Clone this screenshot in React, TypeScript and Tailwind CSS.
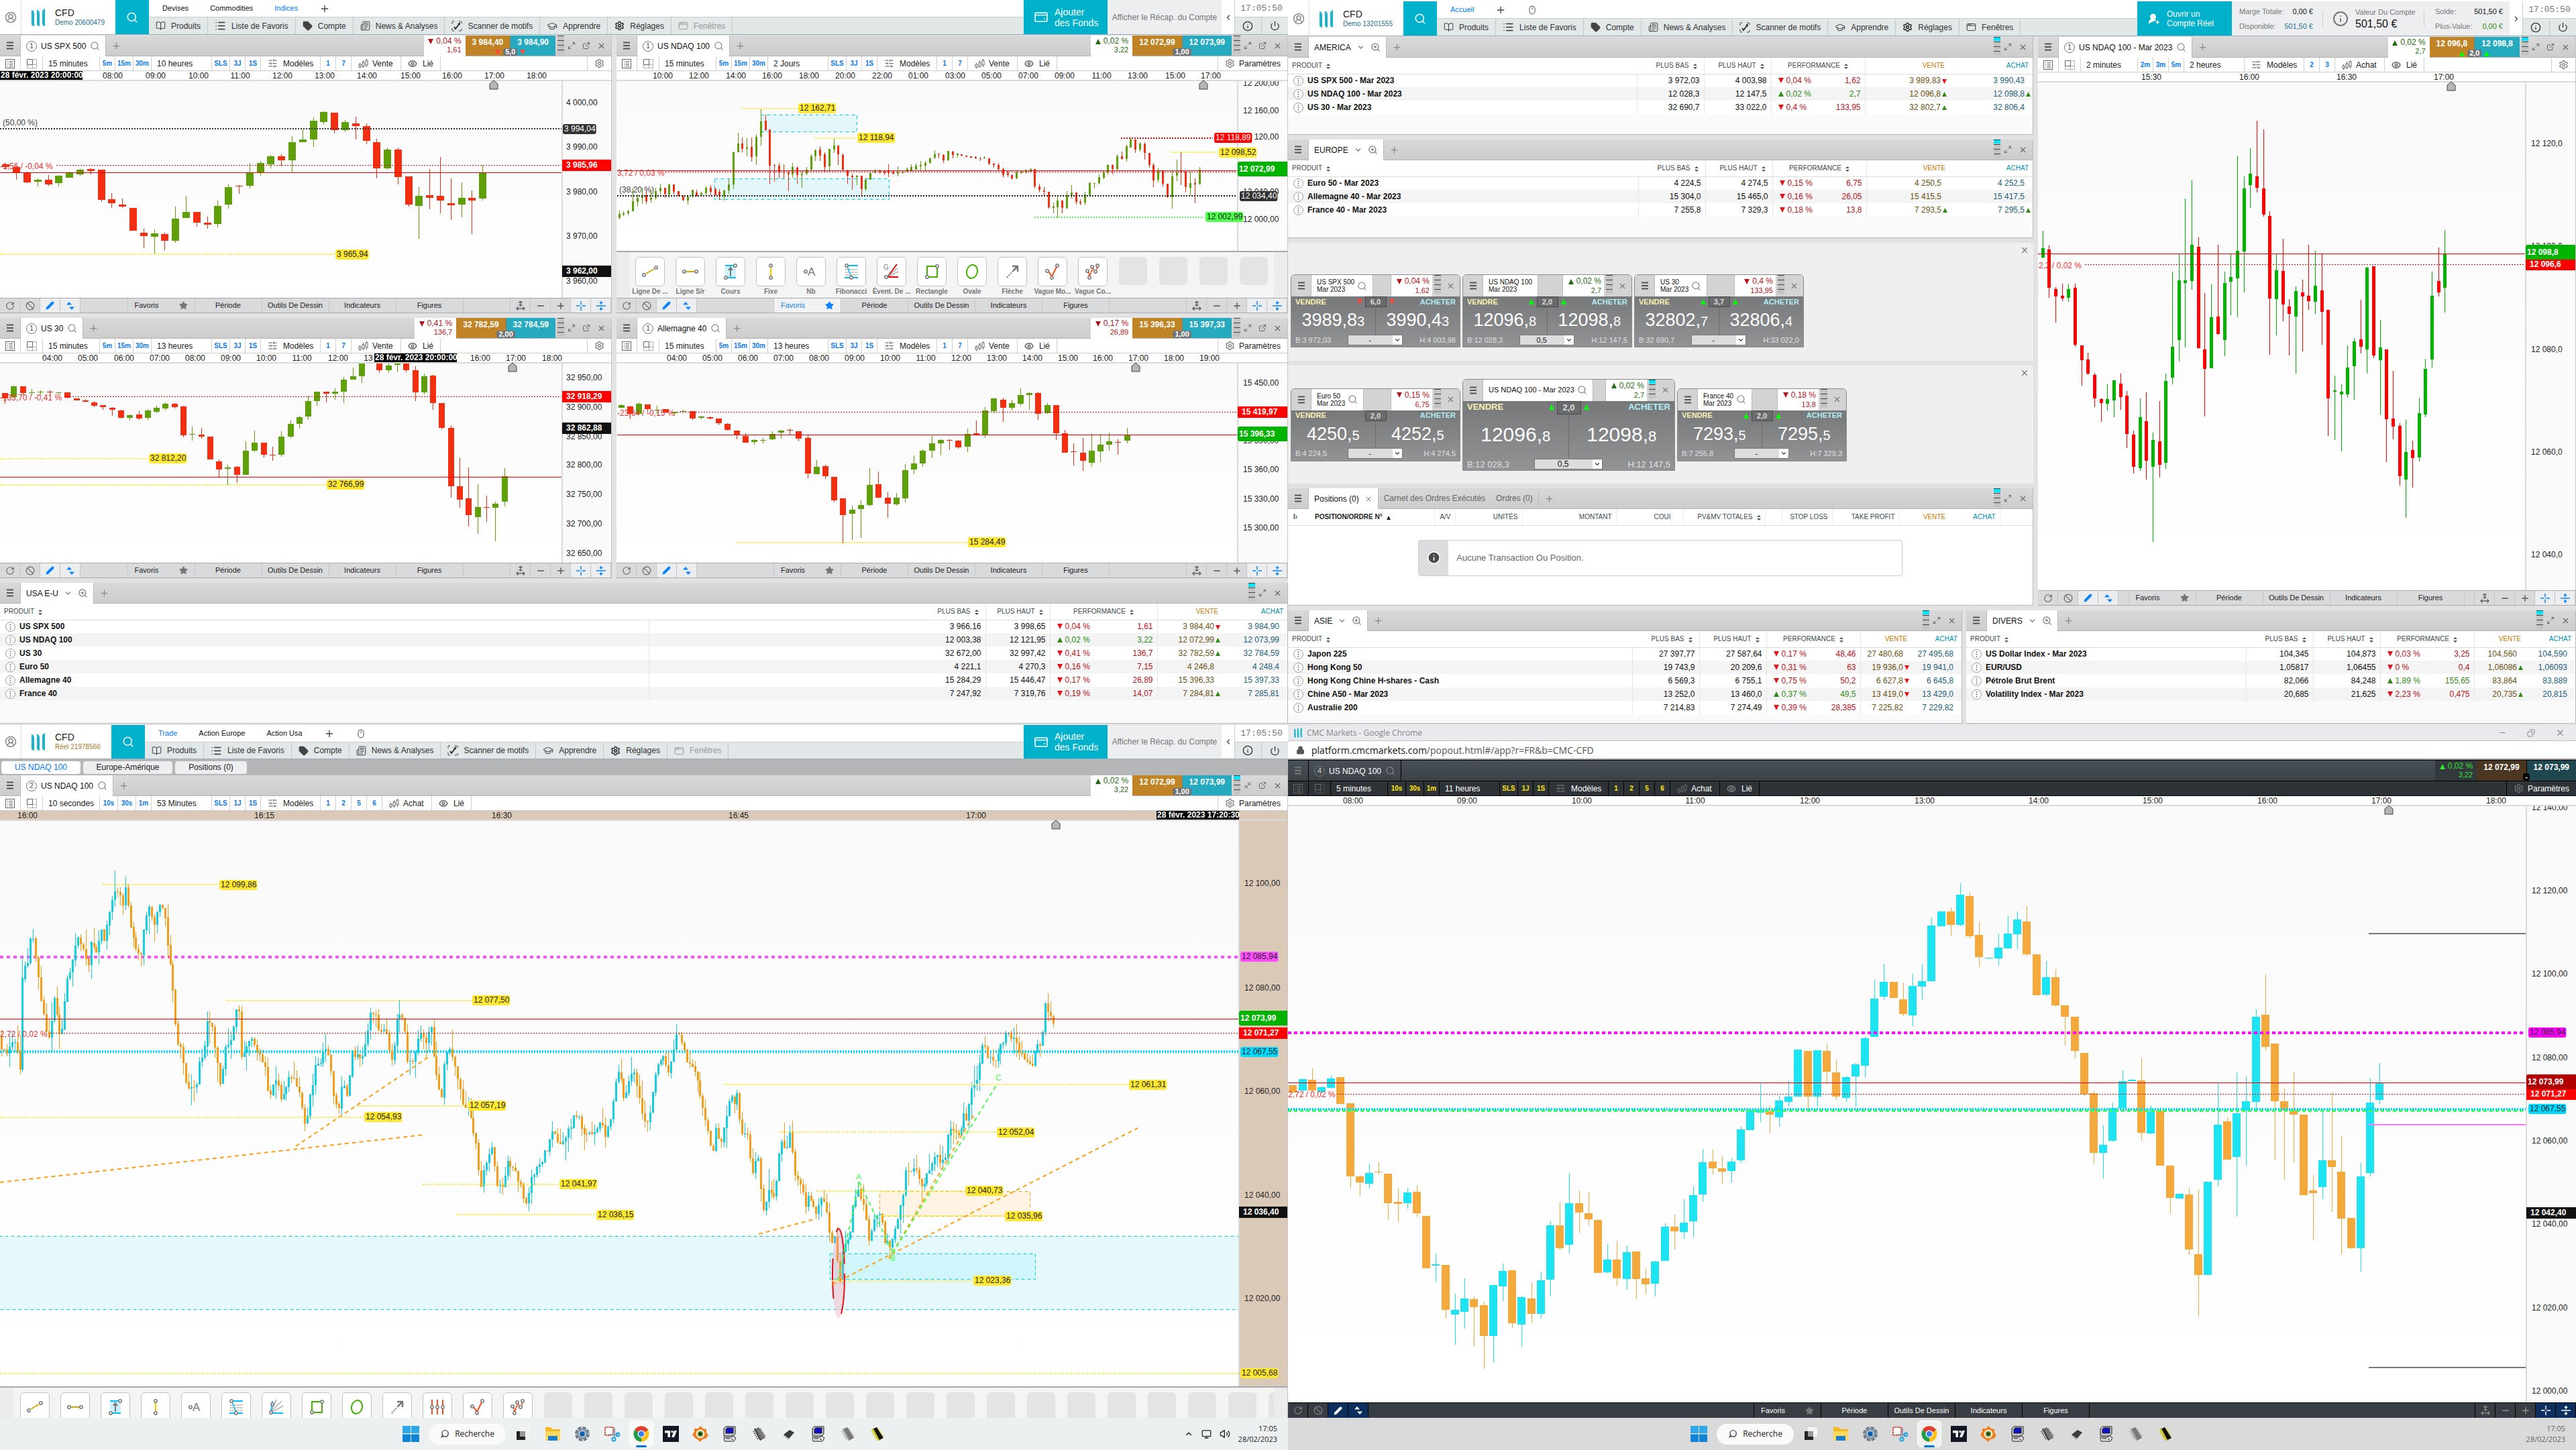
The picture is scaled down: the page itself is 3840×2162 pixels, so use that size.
import React from "react";
import {
  Search, Plus, X, ZoomIn, ChevronDown, ChevronLeft, ChevronRight, ChevronUp, Settings, RotateCw, Ban, Pencil, Star,
  Minus, Power, Info, CircleUserRound, List, Newspaper, GraduationCap, SlidersHorizontal, Eye, ExternalLink,
  Maximize2, Minimize2, Volume2, Lock, Tag, AppWindow, BookOpen, UserRoundPlus, Monitor, MouseIcon, Copy,
} from "lucide-react";

/* ---------- small drawings ---------- */

const Tri = ({ up, className = "" }: { up?: boolean; className?: string }) => (
  <svg width="8" height="8" viewBox="0 0 8 8" className={"inline-block shrink-0 " + className} aria-hidden="true">
    <path d={up ? "M4 0 8 8H0Z" : "M0 0H8L4 8Z"} fill="currentColor" />
  </svg>
);

const Bars = ({ className = "text-[#444]" }: { className?: string }) => (
  <svg width="10" height="12" viewBox="0 0 10 12" className={className} aria-hidden="true">
    <path d="M0 1.5H10M0 6H10M0 10.5H10" stroke="currentColor" strokeWidth="2" />
  </svg>
);

const Ladder = ({ on }: { on?: boolean }) => (
  <svg width="10" height="28" viewBox="0 0 10 28" className="ml-[3px] shrink-0" aria-hidden="true">
    <rect width="10" height="28" fill="#c4c4c4" />
    {on && <rect y="1" width="10" height="5" fill="#00e5ff" />}
    <path d="M0 .5H10M0 7.500H10M0 14.500H10M0 21.500H10" stroke="#444" />
  </svg>
);

const SortIcon = () => (
  <svg width="6" height="8" viewBox="0 0 6 8" className="ml-1.5 inline-block" aria-hidden="true">
    <path d="M3 0 6 3H0ZM3 8 0 5H6Z" fill="#4b5a60" />
  </svg>
);

const Logo = () => (
  <svg width="22" height="26" viewBox="0 0 22 26" aria-hidden="true">
    <path d="M1 2q4 .5 4 6v18q-4-.5-4-3ZM9 1.500q4 .5 4 6V26q-4-.5-4-3ZM21 0v26q-4-.5-4-4V5q0-4 4-5Z" fill="#17b5d0" />
  </svg>
);

const CandleIcon = () => (
  <svg width="15" height="14" viewBox="0 0 15 14" fill="none" stroke="currentColor" aria-hidden="true">
    <path d="M2.500 6V8M2.500 12V14M7.500 2V5M7.500 11V13M12.500 0V2M12.500 9V12" />
    <rect x="1" y="8" width="3" height="4" />
    <rect x="6" y="5" width="3" height="6" />
    <rect x="11" y="2" width="3" height="7" />
  </svg>
);

const ListBox = () => (
  <svg width="14" height="14" viewBox="0 0 14 14" fill="none" stroke="currentColor" aria-hidden="true">
    <rect x=".5" y=".5" width="13" height="13" />
    <path d="M3 3.500H4M5.500 3.500H11M3 6H4M5.500 6H11M3 8.500H4M5.500 8.500H11M3 11H4M5.500 11H11" />
  </svg>
);

const GridBox = () => (
  <svg width="15" height="14" viewBox="0 0 15 14" fill="none" stroke="currentColor" aria-hidden="true">
    <path d="M.5.5H8.500V8.500H.5Z" />
    <path d="M8.500.5H14.500V13.500H.5V8.500M8.500 8.500H14.500M8.500 8.500V13.500" strokeDasharray="1 1" />
  </svg>
);

const ScannerIcon = () => (
  <svg width="16" height="16" viewBox="0 0 16 16" fill="none" stroke="currentColor" aria-hidden="true">
    <path d="M1 5V1H5M11 1H15V5M1 11V15H5M11 15H15V11" strokeDasharray="3 1" />
    <path d="M4 9 6 12 12 4" strokeWidth="2" />
    <path d="M13 2.500 9 4 12.500 7Z" fill="currentColor" stroke="none" />
  </svg>
);

const StretchIcon = () => (
  <svg width="14" height="14" viewBox="0 0 14 14" fill="none" stroke="currentColor" strokeWidth="1.500" aria-hidden="true">
    <path d="M7 0V8M4.500 2.500 7 0 9.500 2.500M4.500 6H9.500M1 11H13M3.500 8.500 1 11 3.500 13.500M10.500 8.500 13 11 10.500 13.500" />
  </svg>
);

const CrossIcon = () => (
  <svg width="14" height="14" viewBox="0 0 14 14" stroke="currentColor" aria-hidden="true">
    <path d="M7 0V5.500M7 8.500V14M0 7H5.500M8.500 7H14" strokeWidth="1.500" />
  </svg>
);

const SplitIcon = () => (
  <svg width="14" height="14" viewBox="0 0 14 14" fill="none" stroke="currentColor" aria-hidden="true">
    <path d="M0 7H14M7 1V5M7 9V13M5 3 7 1 9 3M5 11 7 13 9 11" strokeWidth="1.500" />
  </svg>
);

const UpDown = () => (
  <svg width="12" height="12" viewBox="0 0 12 12" fill="currentColor" aria-hidden="true">
    <path d="M4 0 8 4.500H0ZM8 12 4 7.500H12Z" />
  </svg>
);

/* ---------- page header ---------- */

const menuItems: [string, React.ReactNode][] = [
  ["Produits", <BookOpen size={15} strokeWidth={1.5} />],
  ["Liste de Favoris", <List size={17} strokeWidth={2} />],
  ["Compte", <Tag size={15} fill="#444" stroke="#444" />],
  ["News & Analyses", <Newspaper size={15} strokeWidth={1.5} />],
  ["Scanner de motifs", <ScannerIcon />],
  ["Apprendre", <GraduationCap size={16} strokeWidth={1.5} />],
  ["Réglages", <Settings size={15} strokeWidth={2.5} />],
  ["Fenêtres", <AppWindow size={15} strokeWidth={1.5} />],
];

function Header(p: {
  kind: string; id: string; real?: boolean; tabs: string[]; active: string; mouse?: boolean; noWindows?: boolean; summary?: boolean;
}) {
  return (
    <header className={"flex shrink-0 border-b border-[#9fabb8] bg-white " + (p.real ? "h-[51px]" : "h-[52px]")}>
      <button aria-label="Profil" className="flex w-8 items-center justify-center border-r border-[#ddd] text-[#888]">
        <CircleUserRound size={18} />
      </button>
      <div className={"flex items-center gap-3.5 pl-3.5 " + (p.real ? "w-[134px]" : "w-[140px]")}>
        <Logo />
        <div>
          <div className="text-[14px] leading-4 text-[#222]">CFD</div>
          <div className={"whitespace-nowrap text-[10px] leading-[14px] " + (p.real ? "text-[#a87b25]" : "text-[#1d6f92]")}>
            {p.kind} {p.id}
          </div>
        </div>
      </div>
      <button aria-label="Rechercher" className="flex w-[50px] items-center justify-center bg-[#00b1cc] text-white">
        <Search size={18} strokeWidth={2} />
      </button>
      <div className="flex min-w-0 flex-1 flex-col">
        <nav className="flex h-[25px] items-center gap-8 pl-5 text-[11px] text-[#111]">
          {p.tabs.map((t) => (
            <button key={t} className={t === p.active ? "text-[#007aff]" : ""}>{t}</button>
          ))}
          <button aria-label="Ajouter un onglet" className="text-[#444]"><Plus size={16} strokeWidth={2} /></button>
          {p.mouse && <MouseIcon size={14} strokeWidth={2} className="text-[#666]" />}
        </nav>
        <nav className="flex flex-1 border-t border-[#c9cdcf] bg-[#e2e7e8] text-[12px] text-[#333]">
          {menuItems.map(([t, icon]) => (
            <button
              key={t}
              className={"flex items-center gap-2 whitespace-nowrap border-r border-[#c3c8ca] px-2.5 " + (p.noWindows && t === "Fenêtres" ? "text-[#999]" : "")}
            >
              {icon}
              {t}
            </button>
          ))}
        </nav>
      </div>
      {p.summary ? (
        <>
          <button className="flex w-[141px] items-center gap-2.5 bg-[#00b1cc] pl-4 text-left text-[12px] leading-[14px] text-white">
            <UserRoundPlus size={18} fill="white" />
            <span>Ouvrir un<br />Compte Réel</span>
          </button>
          <div className="flex w-[414px] items-center bg-[#edeef0] pl-[11px] text-[11px] leading-[22px] text-[#777]">
            <dl className="grid w-[110px] grid-cols-[1fr_auto]">
              <dt>Marge Totale:</dt><dd className="text-right text-[#111]">0,00 €</dd>
              <dt>Disponible:</dt><dd className="text-right text-[#1d6f92]">501,50 €</dd>
            </dl>
            <div className="mx-3.5 h-6 border-l border-[#ccc]" />
            <Info size={24} strokeWidth={2} />
            <div className="ml-2.5 flex-1 leading-4">
              Valeur Du Compte
              <div className="text-[16px] leading-5 text-[#111]">501,50 €</div>
            </div>
            <div className="mr-4 h-6 border-l border-[#ccc]" />
            <dl className="mr-2.5 grid w-[101px] grid-cols-[1fr_auto]">
              <dt>Solde:</dt><dd className="text-right text-[#111]">501,50 €</dd>
              <dt>Plus-Value:</dt><dd className="text-right text-[#2f8a16]">0,00 €</dd>
            </dl>
          </div>
        </>
      ) : (
        <>
          <button className="flex w-[125px] items-center gap-2.5 bg-[#00b1cc] pl-4 text-left text-[14px] leading-4 text-white">
            <svg width="20" height="15" viewBox="0 0 20 15" fill="none" stroke="white" strokeWidth="1.500" aria-hidden="true">
              <rect x="1" y="1" width="18" height="13" rx="1" />
              <path d="M1 4.500H19M15 9V11" />
            </svg>
            <span>Ajouter<br />des Fonds</span>
          </button>
          <button className="w-[170px] whitespace-nowrap bg-[#edeef0] text-[12px] text-[#777]">Afficher le Récap. du Compte</button>
        </>
      )}
      <button aria-label="Replier" className="flex w-[19px] items-center justify-center text-[#555]">
        {p.summary ? <ChevronRight size={12} strokeWidth={3} /> : <ChevronLeft size={12} strokeWidth={3} />}
      </button>
      <div className="flex w-20 flex-col border-l border-[#ccc]">
        <time className="flex h-[25px] items-center justify-center font-['Liberation_Mono',monospace] text-[13px] text-[#777]">17:05:50</time>
        <div className="grid flex-1 grid-cols-2 border-t border-[#c9cdcf] bg-[#e2e7e8] text-[#333]">
          <button aria-label="Informations" className="flex items-center justify-center border-r border-[#c3c8ca]"><Info size={16} strokeWidth={2} /></button>
          <button aria-label="Déconnexion" className="flex items-center justify-center"><Power size={15} strokeWidth={2} /></button>
        </div>
      </div>
    </header>
  );
}

/* ---------- panel chrome ---------- */

function WindowButtons({ popout, min, dark }: { popout?: boolean; min?: boolean; dark?: boolean }) {
  if (dark) return null;
  const cls = "flex w-[22px] items-center justify-center text-[#666]";
  return (
    <div className="mr-1 flex">
      <button aria-label="Agrandir" className={cls}>{min ? <Minimize2 size={12} /> : <Maximize2 size={12} strokeWidth={2} />}</button>
      {popout && <button aria-label="Détacher" className={cls}><ExternalLink size={12} strokeWidth={2} /></button>}
      <button aria-label="Fermer" className={cls}><X size={13} strokeWidth={2} /></button>
    </div>
  );
}

function ChartTabs(p: {
  n: string; name: string; up?: boolean; pct: string; diff: string; sell: string; buy: string; spread: string;
  tick?: "up" | "down"; ladder?: boolean; min?: boolean; dark?: boolean;
}) {
  const d = p.dark;
  return (
    <div className={"flex h-[31px] shrink-0 border-b " + (d ? "border-black bg-linear-to-b from-[#4a5057] to-[#3b4147]" : "border-[#b4b4b4] bg-linear-to-b from-[#d9d9d9] to-[#cccccc]")}>
      <button aria-label="Menu" className={"flex w-[31px] items-center justify-center border-r " + (d ? "border-black" : "border-[#bbb]")}>
        <Bars className={d ? "text-[#777]" : "text-[#555]"} />
      </button>
      <div className={"-mb-px flex items-center gap-1.5 border-r px-2 text-[12px] " + (d ? "border-black text-white" : "border-[#bbb] bg-white text-[#111]")}>
        <span className={"flex size-4 items-center justify-center rounded-full border border-[#777] text-[11px] leading-none " + (d ? "text-[#ccc]" : "text-[#555]")}>{p.n}</span>
        <span className="whitespace-nowrap">{p.name}</span>
        <Search size={15} strokeWidth={2} className="text-[#888]" />
      </div>
      {!d && <button aria-label="Nouvel onglet" className="ml-2 text-[#888]"><Plus size={15} strokeWidth={2} /></button>}
      <div className="flex-1" />
      <div className={"w-[62px] pr-1.5 pt-0.5 text-right leading-[13px] " + (d ? "bg-[#33383c] text-[#2ee62e]" : "-mb-px bg-white " + (p.up ? "text-[#1f6b10]" : "text-[#b8121b]"))}>
        <div className="whitespace-nowrap text-[12px]"><Tri up={p.up} className="mr-1" />{p.pct}</div>
        <div className="text-[11px]">{p.diff}</div>
      </div>
      <div className="relative flex text-[12px] font-bold leading-[21px] text-white">
        <button className={"flex items-start px-2.5 " + (d ? "bg-[#4a3621]" : "bg-[#c08427]")}>{p.sell}</button>
        <button className={"flex items-start border-l px-2.5 " + (d ? "border-black bg-[#1e4750]" : "border-[#777] bg-[#26aabf]")}>{p.buy}</button>
        <div className="absolute inset-x-0 bottom-0 flex items-center justify-center gap-1">
          {p.tick && <Tri up={p.tick === "up"} className={p.tick === "up" ? "text-[#0f0]" : "text-[#ff4a3a]"} />}
          <span className={"rounded-sm px-[3px] text-[11px] leading-[11px] text-white " + (d ? "bg-black" : "bg-[#707376]")}>{p.spread}</span>
          {p.tick && <Tri up={p.tick === "up"} className={p.tick === "up" ? "text-[#0f0]" : "text-[#ff4a3a]"} />}
        </div>
      </div>
      {!d && <Ladder on={p.ladder} />}
      <WindowButtons popout min={p.min} dark={d} />
    </div>
  );
}

function Toolbar(p: {
  period: string; chips: string[]; span: string; spans: string[]; models: string[]; side: string; params?: boolean; dark?: boolean;
}) {
  const b = p.dark ? "border-black" : "border-[#d0d0d0]";
  const chip = "flex items-center justify-center border-r text-[10px] font-bold " + b + (p.dark ? " text-[#ffe600]" : " text-[#0a78f0]");
  const cell = "flex items-center border-r " + b;
  return (
    <div className={"flex h-[22px] shrink-0 items-stretch border-b text-[12px] " + (p.dark ? "border-black bg-[#2e3338] text-white" : "border-[#ccc] bg-white text-[#222]")}>
      <button aria-label="Liste" className={cell + " w-[31px] justify-center text-[#666]"}><ListBox /></button>
      <button aria-label="Disposition" className={cell + " w-[33px] justify-center text-[#666]"}><GridBox /></button>
      <button className={cell + " w-[85px] pl-2"}>{p.period}</button>
      {p.chips.map((c) => <button key={c} className={chip + (c.length > 2 ? " w-[27px]" : " w-[23px]")}>{c}</button>)}
      <button className={cell + " w-[90px] pl-2"}>{p.span}</button>
      {p.spans.map((c) => <button key={c} className={chip + (c.length > 2 ? " w-[27px]" : " w-[23px]")}>{c}</button>)}
      <button className={cell + " w-[89px] gap-2 pl-2.5"}><SlidersHorizontal size={15} strokeWidth={2} className="text-[#777]" />Modèles</button>
      {p.models.map((c) => <button key={c} className={chip + " w-[23px]"}>{c}</button>)}
      <button className={cell + " w-[74px] gap-1.5 pl-2.5"}><span className="text-[#666]"><CandleIcon /></span>{p.side}</button>
      <button className={cell + " w-[59px] gap-2 pl-2.5"}><Eye size={14} strokeWidth={3} className="text-[#777]" />Lié</button>
      <div className="flex-1" />
      <button aria-label="Paramètres" className={"flex items-center gap-1.5 border-l px-2.5 " + b}>
        <Settings size={15} strokeWidth={2} className="text-[#777]" />
        {p.params && "Paramètres"}
      </button>
    </div>
  );
}

function BottomBar({ fav, dark }: { fav?: boolean; dark?: boolean }) {
  const b = dark ? "border-black" : "border-[#c3c5c7]";
  const cell = "flex w-[30px] shrink-0 items-center justify-center border-r " + b;
  const on = dark ? " bg-[#0d2f5e] text-white" : " bg-[#ecedef] text-[#0a84ff]";
  const off = dark ? " text-[#888]" : " text-[#666]";
  return (
    <div className={"flex h-[23px] shrink-0 border-t text-[11px] " + (dark ? "border-black bg-[#373d43] text-white" : "border-b border-[#a9a9a9] bg-[#d9dadc] text-[#222]")}>
      <button aria-label="Actualiser" className={cell + off}><RotateCw size={14} /></button>
      <button aria-label="Effacer" className={cell + off}><Ban size={14} /></button>
      <button aria-label="Dessiner" className={cell + on}><Pencil size={13} fill="currentColor" /></button>
      <button aria-label="Ordre" className={cell + on}><UpDown /></button>
      <div className={"flex-1 border-r " + b} />
      <button className={"flex w-[100px] items-center justify-between border-r px-2.5 " + b + (fav ? " bg-[#f2f2f2] text-[#0a84ff]" : "")}>
        Favoris<Star size={13} fill="currentColor" className={fav ? "" : "text-[#777]"} />
      </button>
      {["Période", "Outils De Dessin", "Indicateurs", "Figures"].map((t) => (
        <button key={t} className={"w-[100px] whitespace-nowrap border-r " + b}>{t}</button>
      ))}
      <div className={"flex-1 border-r " + b} />
      <button aria-label="Ajuster" className={cell + off}><StretchIcon /></button>
      <button aria-label="Réduire" className={cell + off}><Minus size={14} strokeWidth={3} /></button>
      <button aria-label="Augmenter" className={cell + off}><Plus size={14} strokeWidth={3} /></button>
      <button aria-label="Réticule" className={cell + on}><CrossIcon /></button>
      <button aria-label="Échelle" className={cell + on}><SplitIcon /></button>
    </div>
  );
}

/* ---------- chart ---------- */

type Line = [number, number, number, number, string, number?, string?];
type PriceTag = [number, number, string, string, string, ("tag" | "axis" | "live")?];
interface ChartProps {
  sx: number; sy: number; dx: number; dy: number;
  axisX: number; priceX: number; barW: number;
  x0: number; step: number; candles: string; up: string; down: string;
  times: [number, string][]; prices: [number, string][];
  under?: Line[]; over?: Line[]; zones?: [number, number, number, number, string, string][];
  tags?: PriceTag[]; notes?: [number, number, string, string][];
  stamp?: [number, string]; marker: number; axisFill?: string; children?: React.ReactNode;
}

const textWidth = (s: string) => [...s].reduce((w, c) => w + (c === " " || c === "," ? 0.278 : 0.556), 0) * 12;

function Chart(c: ChartProps) {
  const X = (v: number) => Math.round(v / c.sx + c.dx);
  const Y = (v: number) => Math.round(v / c.sy + c.dy);
  const top = 14;
  const ax = X(c.axisX);
  const fill = c.axisFill ?? "#fafafa";
  const id = "plot" + c.axisX + "-" + c.marker;
  const line = ([x1, y1, x2, y2, col, w = 1, dash]: Line, i: number) => (
    <line key={i} x1={X(x1)} x2={X(x2)} y1={Y(y1) + (y1 === y2 && w % 2 ? 0.5 : 0)} y2={Y(y2) + (y1 === y2 && w % 2 ? 0.5 : 0)} stroke={col} strokeWidth={w} strokeDasharray={dash} />
  );
  return (
    <svg className="block min-h-0 w-full flex-1" fontSize="12" role="img" aria-label="Graphique en chandeliers">
      <defs>
        <linearGradient id={id} x1="0" y1="0" x2="0" y2="1">
          <stop offset="0" stopColor="#f9f9f9" />
          <stop offset="1" stopColor="#ffffff" />
        </linearGradient>
      </defs>
      <rect width="100%" height="100%" fill={`url(#${id})`} />
      {c.zones?.map(([x1, y1, x2, y2, f, s], i) => (
        <rect key={i} x={X(x1) + 0.5} y={Y(y1) + 0.5} width={X(x2) - X(x1)} height={Y(y2) - Y(y1)} fill={f} stroke={s} strokeDasharray="5 4" />
      ))}
      {c.under?.map(line)}
      <g shapeRendering="crispEdges">
        {c.candles.trim().split(/\s+/).map((s, i) => {
          if (s === "-") return null;
          const [a, b, d, e, k] = s.split(",");
          const cx = Math.round((c.x0 + i * c.step) / c.sx + c.dx);
          const col = k === "u" ? c.up : k === "d" ? c.down : "#111";
          return (
            <g key={i} fill={col}>
              <rect x={cx} y={Y(+a)} width="1" height={Math.max(1, Y(+e) - Y(+a))} />
              <rect x={cx - Math.floor(c.barW / 2)} y={Y(+b)} width={c.barW} height={Math.max(1, Y(+d) - Y(+b))} />
            </g>
          );
        })}
      </g>
      {c.children}
      {c.over?.map(line)}
      {c.notes?.map(([x, y, t, col]) => <text key={t} x={X(x)} y={Y(y) + 4} fill={col}>{t}</text>)}
      <rect x={ax} y={top} width="2000" height="100%" fill={fill} />
      <line x1={ax} x2={ax} y1={top} y2="100%" stroke="#dadada" strokeWidth="2" />
      {c.prices.map(([y, t]) => <text key={t} x={X(c.priceX)} y={Y(y) + 4} fill="#222">{t}</text>)}
      <rect width="100%" height={top} fill={c.axisFill ?? "#fff"} />
      <line x1="0" x2="100%" y1={top} y2={top} stroke="#dadada" strokeWidth="2" />
      {c.times.map(([x, t]) => <text key={t} x={X(x)} y="11" textAnchor="middle" fill="#222">{t}</text>)}
      {c.stamp && (
        <>
          <rect x={X(c.stamp[0])} width="123" height="13" fill="#000" />
          <text x={X(c.stamp[0]) + 1} y="10" fill="#fff" fontWeight="bold">{c.stamp[1]}</text>
        </>
      )}
      <path d={`M${X(c.marker) - 6} ${top + 13}v-8l6 -5 6 5v8z`} fill="#b5b5b5" stroke="#444" />
      {c.tags?.map(([x, y, t, bg, fg, kind = "tag"], i) => {
        const h = kind === "live" ? 22 : kind === "axis" ? 17 : 15;
        return (
          <g key={i}>
            <rect x={X(x)} y={Y(y) - Math.floor(h / 2)} width={kind === "tag" ? textWidth(t) + 3 : 76} height={h} rx={kind === "axis" ? 0 : 3} fill={bg} />
            <text x={X(x) + (kind === "axis" ? 6 : 2)} y={Y(y) + 4} fill={fg} fontWeight={kind === "tag" ? "normal" : "bold"}>{t}</text>
          </g>
        );
      })}
    </svg>
  );
}

const G = "#5fa00a", R = "#f42e10", YL = "#ffe82e", RED = "#f00000";
const DOT = "2 2";
const hours = (xs: number[], from: number): [number, string][] =>
  xs.map((x, i) => [x, String(from + i).padStart(2, "0") + ":00"]);

const spx = `732,735,747,760,d 745,747,772,804,d 767,772,816,819,d 799,804,813,834,u 784,804,825,831,d 784,786,819,834,u 769,771,795,795,u 756,759,780,785,u 752,756,765,780,d 759,759,894,903,d 864,891,909,930,d 888,915,924,930,d 930,930,1032,1032,d 1023,1041,1056,1110,d 1026,1044,1059,1134,u 1041,1047,1077,1119,d 924,978,1077,1086,u 876,948,975,975,u 948,948,996,1014,d 969,996,1005,1023,d 897,921,1002,1017,u 825,837,915,933,u 829,831,834,867,d 729,772,831,843,u 720,729,772,786,u 693,699,735,753,u 690,699,717,744,d 609,636,717,772,u 579,624,636,636,u 525,540,624,657,u 498,501,546,558,u 504,504,582,597,d 538,546,582,591,u 522,552,564,624,d 552,564,630,645,d 621,636,753,798,d 660,669,753,759,u 660,669,792,825,d 789,789,915,924,d 837,876,921,1068,u 756,873,885,936,d 702,876,897,954,d 798,909,918,984,d 816,885,915,972,u 852,885,897,1047,d 738,772,888,897,u`;

const us30 = `329,329,350,371,d 301,303,345,350,u 303,303,329,337,d 313,326,329,338,u 320,323,326,336,u 320,324,327,342,d 327,327,329,336,u 327,327,348,350,d 350,350,358,358,d 353,358,363,366,d 360,366,379,384,d 376,376,384,395,d 383,387,395,418,d 395,397,426,429,d 413,416,426,436,u 400,413,429,433,d 392,397,426,434,u 379,387,402,408,u 366,371,389,397,u 368,371,384,389,d 379,382,494,502,d 460,488,491,515,u 465,491,499,507,d 499,499,588,588,d 588,596,627,658,d 609,619,625,687,u 614,617,648,679,d 517,554,648,648,u 476,523,554,559,u 523,523,570,580,d 538,569,571,593,d 478,499,570,578,u 436,449,499,504,u 418,423,449,468,u 340,361,421,433,u 324,324,361,379,u 324,324,332,366,d 311,324,332,355,u 267,277,324,368,u 230,264,277,277,u 212,212,264,290,u - 212,212,240,252,d 212,222,240,251,u 212,212,220,248,u 212,212,240,248,d 225,240,327,361,d 253,264,327,335,u 259,261,368,395,d 368,368,465,470,d 455,465,693,737,d 583,693,745,776,d 619,740,805,849,d 685,774,813,878,u 729,773,776,831,d 753,760,776,907,u 622,654,753,771,u`;

const dax = `362,364,374,376,u 367,369,398,417,d 354,359,396,398,u 362,362,379,391,d 367,382,384,396,u 379,379,391,395,d 389,389,395,404,u 383,386,389,391,u 387,387,415,420,d 404,407,412,418,u 407,410,414,417,d 415,415,432,439,d 432,435,458,461,d 460,460,476,492,d 471,481,506,506,d 494,496,503,513,u 488,496,498,508,u 464,473,492,496,u 458,460,469,491,u 453,458,460,476,d 463,463,491,501,d 478,488,622,640,d 572,597,625,625,u 589,594,632,642,d 635,635,723,731,d 716,716,779,885,d 744,759,774,872,u 723,741,756,864,u 602,665,741,745,u 615,663,713,716,d 693,713,736,789,d 696,713,738,744,u 587,609,716,731,u 554,584,607,625,u 531,536,584,597,u 481,508,536,564,u 492,496,508,553,u 492,496,499,534,d 496,498,524,529,d 453,473,521,541,u 422,470,476,476,d 372,384,476,488,u 336,339,387,395,u 336,344,374,427,d 344,357,374,384,u 301,326,359,366,u 316,319,325,382,u 314,319,397,420,d 357,364,395,397,u 364,364,470,496,d 458,470,544,544,d 508,539,541,592,d 488,544,574,612,d 473,536,582,597,u 473,513,539,579,u 468,501,513,536,u 493,503,506,551,d 450,476,498,508,u`;

const ndaq2d = `942,957,975,981,u 945,954,960,966,u 939,945,955,963,u 840,900,945,945,u 870,885,903,924,u 840,873,885,912,u 855,873,900,912,d 849,885,894,905,u 840,855,885,895,u 822,840,855,870,u 840,840,867,885,d 822,825,870,885,u 825,825,857,870,d 855,855,873,880,d 873,880,894,900,d 873,878,897,915,u 848,849,876,885,u 849,860,876,880,d 858,864,873,873,u 834,840,864,876,u 828,840,858,873,d 840,846,873,873,d 846,858,876,894,d 849,852,876,896,u 798,825,852,867,u 678,681,825,846,u 594,642,681,681,u 615,642,665,681,d 618,660,667,699,u 615,657,702,724,d 600,612,699,738,u 486,543,612,650,u 513,540,583,585,d 579,579,740,822,d 735,739,742,813,d 729,741,770,798,d 735,770,775,799,d 765,775,780,855,d 729,747,780,795,u 744,750,784,822,d 765,777,784,840,u 747,759,777,784,u 690,699,759,762,u 670,672,699,720,u 654,669,696,720,d 681,690,747,768,d 666,666,744,770,u 618,651,669,684,u 651,651,690,738,d 687,693,759,765,d 759,765,786,822,d 777,786,792,849,d 783,786,792,828,u 786,786,846,873,d 795,804,846,855,u 768,774,804,804,u 756,762,774,774,u 759,762,768,777,d 762,768,774,784,d 735,765,775,792,d 765,770,776,780,d 744,770,777,790,u 765,768,774,777,u 750,756,768,768,u 735,747,762,768,u 732,742,759,759,u 720,738,744,765,u 720,729,740,768,u 705,708,729,732,u 672,690,705,712,u 684,690,694,708,d 690,693,717,729,d 675,675,717,720,u 676,678,693,708,d 684,687,693,705,u 690,690,696,698,d 696,696,702,702,d 699,699,705,708,d 699,702,708,712,d 705,707,711,720,d 699,704,708,711,u 708,708,732,738,d 729,732,738,750,d 729,738,756,765,d 750,756,783,796,d 765,774,783,792,d 780,783,798,805,d 765,771,798,801,u 765,768,774,777,u 755,765,771,777,u 753,757,768,772,u 756,756,834,844,d 822,834,850,862,d 837,852,858,876,d 858,858,927,933,d 906,924,930,954,u 879,897,927,972,u 897,897,930,954,d 855,873,930,936,u 828,861,876,889,u 861,861,903,915,d 891,903,909,918,d 858,870,906,918,u 813,819,873,880,u 819,819,822,843,u 780,793,819,825,u 765,771,795,801,u 735,738,771,780,u 735,738,756,780,d 690,699,756,765,u 678,699,711,714,d 648,654,711,723,u 618,624,660,660,u 624,624,669,684,d 636,642,669,678,u 636,645,684,714,d 684,684,738,750,d 729,738,807,837,d 753,762,804,816,u 762,762,822,834,d 822,822,882,885,d 762,789,882,933,u 714,770,786,810,u 681,765,770,828,d 765,768,837,861,d 768,819,840,873,u 798,819,825,909,d 747,759,822,828,u`;

const ndaqMar = `574,617,641,642,u 611,621,716,741,d 714,719,737,802,d 706,736,742,749,d 706,719,741,751,u 706,716,857,862,d 859,859,896,959,d 877,894,929,932,d 927,932,991,1013,d 991,993,1003,1049,d 956,993,1004,1021,u 946,946,996,1038,u 929,954,988,1019,d 972,984,1079,1114,d 1071,1081,1161,1178,d 991,1038,1164,1171,u 976,1048,1146,1193,d 1076,1094,1161,1348,u 998,1098,1156,1188,d 929,947,1151,1166,u 676,862,939,956,u 631,697,846,899,u 494,697,704,864,u 449,609,699,721,u 591,614,866,867,d 729,869,917,1036,d 707,789,916,916,u 609,787,831,832,d 676,704,846,886,u 631,689,701,784,u 387,624,692,789,u 439,469,626,727,u 369,432,460,517,u 300,439,467,479,d 322,469,534,539,d 525,537,742,882,d 631,672,744,834,u 594,674,757,799,d 744,762,781,884,d 712,724,787,929,u 696,727,737,874,d 609,736,749,771,d 624,711,751,781,u 631,722,776,857,d 771,771,991,1084,d 934,971,974,1094,u 956,974,981,1123,u 859,914,981,989,u 841,849,911,994,u 746,844,862,879,d 664,666,869,929,u 662,662,884,891,d 796,864,896,1031,u 869,869,1043,1149,d 922,1041,1061,1093,d 1053,1059,1184,1208,d 1044,1124,1193,1288,u 1096,1119,1139,1213,d 991,1028,1138,1148,u 892,917,1031,1038,u 676,736,894,914,u 616,699,727,737,d 572,631,716,777,u`;

const ndaq5m = `783,783,799,799,d 770,771,795,800,u 747,772,795,797,d 786,788,798,800,u 763,769,789,790,u 766,766,824,824,d 822,822,979,1004,d 977,979,992,1021,d 952,972,995,1005,u 949,969,971,975,d 974,974,1037,1073,d 1005,1034,1039,1078,d 1004,1014,1037,1048,u 998,1013,1059,1066,d 1065,1065,1177,1177,d 1145,1168,1171,1207,u 1170,1170,1267,1285,d 1232,1267,1277,1342,u 1199,1242,1271,1307,u 1238,1243,1261,1345,d 1249,1256,1323,1393,d 1213,1213,1323,1380,u 1167,1183,1216,1248,u 1181,1181,1295,1305,d 1238,1239,1298,1346,u 1207,1242,1275,1295,d 1185,1203,1275,1285,u 1076,1085,1202,1238,u 1036,1085,1134,1138,d 972,1037,1126,1145,u 1010,1037,1057,1100,d 1013,1059,1072,1085,d 1073,1073,1187,1187,d 1125,1158,1186,1187,u 1118,1158,1199,1214,d 1128,1142,1200,1223,u 1141,1141,1200,1243,d 1177,1199,1212,1234,d 1161,1163,1210,1238,u 1081,1088,1161,1161,u 1062,1088,1098,1137,d 1028,1079,1099,1113,u 1001,1020,1076,1110,u 920,949,1018,1034,u 922,948,962,975,d 935,962,969,996,d 940,948,968,992,u 872,878,945,951,u 837,837,880,880,u 779,837,842,863,u 826,840,847,887,d 808,816,853,873,u 773,808,820,830,u 707,707,808,808,u 710,710,808,840,d 708,708,808,830,u 694,710,754,780,d 728,756,808,815,d 765,766,811,820,u 735,739,764,830,u 680,682,741,768,u 557,597,679,679,u 522,561,593,600,u 561,561,596,596,d 562,599,630,635,d 544,570,633,656,u 522,560,571,599,u 423,440,560,560,u 409,409,441,441,u 401,410,439,461,d 349,374,439,441,u 368,376,463,468,d 433,460,508,529,d 509,509,511,512,u 457,488,510,527,u 420,457,489,490,u 410,427,459,490,u 398,431,502,507,d 502,502,590,590,d 516,551,589,592,u 534,551,612,615,d 612,612,636,698,d 636,636,710,726,d 714,714,802,806,d 795,800,929,952,d 870,911,929,984,u 821,832,903,904,u 752,775,832,840,u 770,772,775,775,u 726,773,885,903,d 826,840,887,888,u 838,838,956,957,d 957,957,1026,1059,d 1017,1017,1027,1027,u 1004,1018,1137,1148,d 1009,1147,1192,1281,d 991,991,1192,1192,u 779,868,987,1001,u 853,861,943,943,d 756,844,938,1066,u 765,818,838,956,u 620,636,820,835,u 545,632,701,708,d 694,694,818,944,d 790,818,838,986,d 754,838,847,949,d 847,847,1020,1020,d 977,1010,1016,1116,d 839,945,1003,1029,u 799,945,959,1056,d 891,970,1070,1147,d 1069,1069,1134,1135,d 951,979,1134,1184,u 769,821,972,979,u 736,779,815,823,u`;

/* turning points of the ten-second series; bars between them are filled in below */
const turns = `2,1553 9,1575 23,1549 32,1595 36,1436 42,1455 48,1386 58,1451 67,1514 74,1555 83,1484 92,1553 101,1464 110,1427 118,1391 126,1419 135,1447 138,1397 146,1415 153,1389 158,1407 168,1340 178,1324 184,1354 189,1326 196,1383 204,1419 212,1424 219,1370 224,1348 231,1377 239,1356 245,1348 251,1411 259,1470 266,1555 272,1559 280,1621 288,1613 294,1621 300,1579 306,1569 312,1516 318,1530 325,1573 331,1617 338,1561 349,1546 353,1498 358,1514 361,1577 369,1557 377,1542 386,1565 395,1585 403,1633 413,1605 421,1640 429,1613 441,1601 449,1633 458,1688 464,1629 473,1585 484,1573 492,1569 497,1617 505,1664 512,1613 521,1646 524,1561 534,1577 545,1569 554,1514 562,1518 570,1542 576,1538 585,1585 594,1522 603,1514 609,1577 615,1593 625,1546 637,1549 644,1530 649,1581 660,1640 664,1585 672,1567 683,1605 692,1644 701,1660 710,1692 718,1768 727,1740 735,1714 744,1770 752,1765 760,1730 766,1738 775,1760 785,1798 794,1755 803,1744 812,1725 825,1690 836,1702 846,1700 854,1672 863,1660 870,1688 879,1688 889,1694 897,1666 903,1692 912,1672 919,1613 926,1593 932,1640 946,1589 958,1660 969,1681 977,1608 989,1571 996,1602 1011,1540 1021,1565 1033,1596 1043,1614 1052,1663 1058,1687 1064,1730 1069,1681 1075,1712 1082,1675 1092,1632 1096,1645 1101,1626 1107,1693 1116,1693 1124,1749 1131,1721 1139,1810 1147,1779 1156,1785 1166,1706 1172,1716 1179,1693 1188,1755 1196,1767 1202,1798 1206,1779 1217,1813 1226,1788 1233,1798 1242,1859 1247,1846 1253,1908 1258,1868 1268,1847 1275,1785 1281,1776 1291,1798 1298,1853 1305,1813 1312,1804 1321,1853 1330,1862 1340,1822 1347,1785 1352,1746 1367,1746 1376,1773 1384,1752 1395,1724 1410,1736 1417,1675 1430,1700 1438,1660 1445,1669 1448,1629 1457,1620 1465,1556 1481,1583 1493,1565 1502,1531 1514,1553 1530,1577 1540,1596 1548,1553 1555,1556 1561,1488 1564,1513 1570,1521`
  .split(" ").map((s) => s.split(",").map(Number));

const tenSec = (() => {
  const at = (x: number) => {
    let i = 1;
    while (i < turns.length - 1 && turns[i][0] < x) i++;
    const [a, b] = [turns[i - 1], turns[i]];
    const t = Math.min(1, Math.max(0, (x - a[0]) / (b[0] - a[0])));
    return a[1] + (b[1] - a[1]) * t;
  };
  const rnd = (n: number) => Math.abs(Math.sin(n * 12.9898) * 43758.5453) % 1;
  const out: string[] = [];
  for (let i = 0; i < 400; i++) {
    const x = 2 + i * 3.93;
    const o = at(x - 2) + (rnd(i) - 0.5) * 14;
    const e = at(x + 2) + (rnd(i + 1) - 0.5) * 14;
    const t = Math.min(o, e), b = Math.max(o, e);
    out.push([t - rnd(i + 500) * rnd(i + 90) * 32, t, b, b + rnd(i + 900) * rnd(i + 40) * 32].map(Math.round).join(",") + (e < o ? ",u" : ",d"));
  }
  return out.join(" ");
})();

/* ---------- drawing tools tray ---------- */

const gc = { fill: "none", stroke: "#777", strokeWidth: 1.5 };
const Dots = ({ at }: { at: [number, number][] }) => (
  <>{at.map(([x, y]) => <circle key={x + "-" + y} cx={x} cy={y} r="2.200" {...gc} fill="#fff" />)}</>
);
const toolIcons: Record<string, React.ReactNode> = {
  "Ligne De ...": <><path d="M8 16 20 9" stroke="#d9a300" strokeWidth="2" /><Dots at={[[5, 18], [23, 7]]} /></>,
  "Ligne S/r": <><path d="M8 13H20" stroke="#d9a300" strokeWidth="2" /><Dots at={[[5, 13], [23, 13]]} /></>,
  Cours: <><rect x="6" y="4" width="16" height="18" fill="#cdf0fc" /><path d="M6 4H20M8 22H22" stroke="#00bfff" strokeWidth="2" /><path d="M14 20V8M11 11 14 7 17 11" {...gc} strokeWidth={2} /><Dots at={[[21, 4], [7, 22]]} /></>,
  Fixe: <><path d="M14 6V20" stroke="#f5cf00" strokeWidth="2" /><Dots at={[[14, 4], [14, 22]]} /></>,
  Nb: <><text x="9" y="19" fontSize="17" fill="#777">A</text><Dots at={[[6, 13]]} /></>,
  Fibonacci: <><path d="M10 4H24M4 22H24" stroke="#00bfff" strokeWidth="2" /><path d="M5 10H24M5 14H24M5 18H24" stroke="#777" strokeDasharray="2 1" /><path d="M8 5 14 21" stroke="#00bfff" strokeWidth="1.500" /><Dots at={[[7, 4], [14, 22]]} /></>,
  "Évent. De ...": <><path d="M8 21 22 2M9 21H24" stroke="#f00000" strokeWidth="2" /><path d="M8 20 23 8M8 21 24 13" {...gc} strokeWidth={1} /><text x="2" y="10" fontSize="10" fill="#777">G</text><Dots at={[[6, 21]]} /></>,
  Éventail: <><path d="M6 20 8 4M8 22H24" stroke="#00bfff" strokeWidth="2" /><path d="M6 20 14 2M6 20 22 4M7 21 24 11" {...gc} strokeWidth={1} /><Dots at={[[6, 21], [8, 9]]} /></>,
  Rectangle: <><path d="M7 19V5H19M22 8V21H10" fill="none" stroke="#43b000" strokeWidth="2" /><Dots at={[[22, 5], [7, 21]]} /></>,
  Ovale: <ellipse cx="14" cy="13" rx="8" ry="10" transform="rotate(15 14 13)" fill="none" stroke="#43b000" strokeWidth="2" />,
  Flèche: <><path d="M6 22 15 12" stroke="#777" strokeWidth="2" strokeDasharray="2 2" /><path d="M15 12 21 6M14 5H22V13" fill="none" stroke="#777" strokeWidth="2.500" /></>,
  Cycles: <><path d="M6 2V24M14 2V24M22 2V24" stroke="#ff4d1a" strokeWidth="2" /><Dots at={[[6, 13], [14, 13], [22, 13]]} /></>,
  "Vague Mo...": <><path d="M8 13 13 20 20 6" fill="none" stroke="#ff4d1a" strokeWidth="2" /><Dots at={[[6, 12], [13, 22], [21, 4]]} /></>,
  "Vague Co...": <><path d="M7 12 9 20 14 8 18 15 21 6" fill="none" stroke="#ff4d1a" strokeWidth="2" strokeDasharray="4 1" /><Dots at={[[6, 12], [9, 22], [13, 6], [18, 13], [21, 4]]} /></>,
};

function Tray({ tools, blanks, labels }: { tools: string[]; blanks: number; labels?: boolean }) {
  return (
    <div className={"flex shrink-0 overflow-hidden border-t-2 border-[#a9a9a9] bg-[#ececec] px-5 " + (labels ? "h-[70px]" : "h-[47px]")}>
      <div className={"flex flex-1 overflow-hidden bg-[#f4f4f4] " + (labels ? "pt-[7px]" : "pl-0.5 pt-[7px]")}>
        {tools.map((t) => (
          <button key={t} aria-label={t} className="flex w-[60px] shrink-0 flex-col items-center">
            <span className="flex size-11 shrink-0 items-center justify-center rounded-md border border-[#c2c2c2] bg-white">
              <svg width="28" height="26" viewBox="0 0 28 26" aria-hidden="true">{toolIcons[t]}</svg>
            </span>
            {labels && <span className="whitespace-nowrap text-[10px] font-bold leading-4 text-[#777]">{t}</span>}
          </button>
        ))}
        {Array.from({ length: blanks }, (_, i) => (
          <div key={i} className="flex w-[60px] shrink-0 justify-center"><div className="size-[42px] rounded-md bg-[#e4e4e4]" /></div>
        ))}
      </div>
    </div>
  );
}

/* ---------- watch lists ---------- */

type Row = [name: string, low: string, high: string, pct: string, diff: string, sell: string, sellDir: string, buy: string, buyDir: string];

const Arrow = ({ d }: { d: string }) => (
  <span className="inline-block w-2.5 pl-0.5 text-left">
    {d && <Tri up={d === "u"} className={"size-[7px] " + (d === "u" ? "text-[#2f8a16]" : "text-[#e8121b]")} />}
  </span>
);

function ListTabs({ title }: { title: string }) {
  return (
    <div className="flex h-[31px] shrink-0 border-b border-[#b4b4b4] bg-linear-to-b from-[#d9d9d9] to-[#cccccc]">
      <button aria-label="Menu" className="flex w-[31px] items-center justify-center border-r border-[#bbb]"><Bars className="text-[#555]" /></button>
      <div className="-mb-px flex items-center gap-2 border-r border-[#bbb] bg-white px-2 text-[12px] text-[#111]">
        {title}
        <ChevronDown size={13} strokeWidth={2} className="text-[#666]" />
        <ZoomIn size={15} strokeWidth={2} className="text-[#777]" />
      </div>
      <button aria-label="Nouvel onglet" className="ml-2 text-[#888]"><Plus size={15} strokeWidth={2} /></button>
      <div className="flex-1" />
      <Ladder on />
      <WindowButtons />
    </div>
  );
}

function WatchList({ title, rows, cols }: { title: string; rows: Row[]; cols: string[] }) {
  const line = "border-r border-[#e6e6e6]";
  return (
    <section className="flex min-h-0 flex-col border-b border-r border-[#b9b9b9] bg-[#fafafa]">
      <ListTabs title={title} />
      <table className="w-full table-fixed border-collapse text-[12px]">
        <colgroup>
          {cols.map((c, i) => <col key={i} className={c} />)}
        </colgroup>
        <thead>
          <tr className="h-6 border-b border-[#dcdcdc] bg-white text-[10px] text-[#3c4a50]">
            <th className="pl-1.5 text-left font-normal">PRODUIT<SortIcon /></th>
            <th className={"pr-2.5 text-right font-normal " + line}>PLUS BAS<SortIcon /></th>
            <th className={"pr-2.5 text-right font-normal " + line}>PLUS HAUT<SortIcon /></th>
            <th className={"text-center font-normal " + line}>PERFORMANCE<SortIcon /></th>
            <th className="pr-1.5 text-right font-normal text-[#c97a00]">VENTE</th>
            <th className="pr-1.5 text-right font-normal text-[#0092ae]">ACHAT</th>
          </tr>
        </thead>
        <tbody>
          {rows.map((r) => {
            const up = r[3].startsWith("+");
            return (
              <tr key={r[0]} className="h-5 bg-white leading-4 text-[#111] even:bg-[#f4f4f4]">
                <td className={"whitespace-nowrap p-0 pl-2 font-bold " + line}>
                  <span className="flex items-center gap-1.5">
                    <svg width="15" height="15" viewBox="0 0 15 15" aria-hidden="true">
                      <circle cx="7.500" cy="7.500" r="7" fill="#fff" stroke="#9a9a9a" />
                      <path d="M7.500 3.500V5M7.500 6.800V8.300M7.500 10V11.500" stroke="#555" strokeWidth="1.500" />
                    </svg>
                    {r[0]}
                  </span>
                </td>
                <td className={"pr-1.5 text-right " + line}>{r[1]}</td>
                <td className={"pr-1.5 text-right " + line}>{r[2]}</td>
                <td className={"px-0 " + line}>
                  <span className={"flex items-center gap-1 pl-2.5 pr-1.5 " + (up ? "text-[#2f8a16]" : "text-[#b8121b]")}>
                    <Tri up={up} className={up ? "" : "text-[#e8121b]"} />
                    {r[3].slice(1)}
                    <span className="ml-auto">{r[4]}</span>
                  </span>
                </td>
                <td className="whitespace-nowrap pr-0.5 text-right text-[#6b5210]">{r[5]}<Arrow d={r[6]} /></td>
                <td className="whitespace-nowrap pr-0.5 text-right text-[#1c5f7a]">{r[7]}<Arrow d={r[8]} /></td>
              </tr>
            );
          })}
        </tbody>
      </table>
    </section>
  );
}

/* ---------- price tiles ---------- */

function Tile(p: {
  name: string; month: string; up?: boolean; pct: string; diff: string; spread: string; tick?: "u" | "d";
  sell: string; buy: string; low: string; high: string; qty?: string; big?: boolean; search?: boolean;
}) {
  const small = p.big ? "text-[22px]" : "text-[20px]";
  const price = (v: string) => <>{v.slice(0, -1)}<span className={small}>{v.slice(-1)}</span></>;
  const tick = p.tick && <Tri up={p.tick === "u"} className={p.tick === "u" ? "text-[#0f0]" : "text-[#ff4a3a]"} />;
  return (
    <article className={"flex flex-col overflow-hidden rounded-t-md border border-[#8a8a8a] " + (p.big ? "h-[137px] w-[317px]" : "h-[109px] w-[253px]")}>
      <div className="flex h-8 shrink-0 bg-[#d3d3d3]">
        <button aria-label="Menu" className="flex w-[30px] items-center justify-center border-r border-[#bbb]"><Bars className="text-[#555]" /></button>
        <div className={"flex items-center gap-1 whitespace-nowrap border-r border-[#bbb] bg-white px-2 text-[#111] " + (p.big ? "text-[11px]" : "text-[10px] leading-[11px]")}>
          <span>{p.name}{p.big ? " - " : <br />}{p.month}</span>
          {p.search !== false && <Search size={15} strokeWidth={2} className="text-[#888]" />}
        </div>
        <div className="flex-1" />
        <div className={"w-[62px] border-l border-[#bbb] bg-white pr-1 pt-0.5 text-right leading-[14px] " + (p.up ? "text-[#1f6b10]" : "text-[#b8121b]")}>
          <div className="whitespace-nowrap text-[12px]"><Tri up={p.up} className="mr-1" />{p.pct}</div>
          <div className="text-[11px]">{p.diff}</div>
        </div>
        <Ladder on={p.big} />
        <button aria-label="Fermer" className="flex w-7 items-center justify-center text-[#777]"><X size={13} strokeWidth={2} /></button>
      </div>
      <div className="flex min-h-0 flex-1 flex-col bg-linear-to-b from-[#77787a] to-[#929395] text-[#e2e2e2]">
        <div className={"flex items-center justify-between px-1.5 font-bold " + (p.big ? "h-[18px] text-[13px]" : "h-4 text-[11px]")}>
          <span className="flex-1 text-[#fbf2b4]">VENDRE</span>
          {tick}
          <span className={"mx-1 self-start border border-[#4a4a4a] bg-[#6a6b6d] text-center font-bold text-[#ddd] " + (p.big ? "w-9 leading-[18px]" : "w-8 leading-3.5")}>{p.spread}</span>
          {tick}
          <span className="flex-1 text-right text-[#b4eef5]">ACHETER</span>
        </div>
        <div className={"grid flex-1 grid-cols-2 text-center text-white " + (p.big ? "text-[30px] leading-[64px]" : "text-[27px] leading-[38px]")}>
          <button className="border-r border-[#6a6b6d]">{price(p.sell)}</button>
          <button>{price(p.buy)}</button>
        </div>
        <div className={"flex items-center justify-between px-1.5 pb-0.5 " + (p.big ? "text-[13px]" : "text-[11px]")}>
          <span>B:{p.low}</span>
          <span className="relative flex">
            <select aria-label={"Quantité " + p.name} defaultValue={p.qty ?? "-"} className={"appearance-none border border-[#777] bg-[#dcdddf] text-center leading-3 text-[#111] " + (p.big ? "h-4 w-[102px] pr-4 text-[12px]" : "h-4 w-[82px] pr-4 text-[11px]")}>
              <option>{p.qty ?? "-"}</option>
            </select>
            <span className="pointer-events-none absolute inset-y-px right-px flex w-3.5 items-center justify-center bg-white text-[#444]"><ChevronDown size={10} strokeWidth={3} /></span>
          </span>
          <span>H:{p.high}</span>
        </div>
      </div>
    </article>
  );
}

function Positions() {
  const th = "border-r border-[#ececec] pr-1.5 text-right font-normal";
  return (
    <section className="flex min-h-0 flex-col border-b border-r border-[#b9b9b9] bg-white">
      <div className="flex h-[31px] shrink-0 items-stretch border-b border-[#b4b4b4] bg-linear-to-b from-[#d9d9d9] to-[#cccccc] text-[12px] text-[#666]">
        <button aria-label="Menu" className="flex w-[31px] items-center justify-center border-r border-[#bbb]"><Bars className="text-[#555]" /></button>
        <button className="-mb-px flex items-center gap-2 border-r border-[#bbb] bg-white px-2 text-[#111]">Positions (0)<X size={12} strokeWidth={2} className="text-[#777]" /></button>
        <button className="px-2">Carnet des Ordres Exécutés</button>
        <button className="px-2">Ordres (0)</button>
        <button aria-label="Nouvel onglet" className="my-1 border-l border-[#bbb] pl-2 text-[#888]"><Plus size={15} strokeWidth={2} /></button>
        <div className="flex-1" />
        <Ladder on />
        <WindowButtons />
      </div>
      <table className="w-full table-fixed border-collapse text-[10px] text-[#3c4a50]">
        <colgroup>
          {["w-[34px]", "w-[184px]", "w-[31px]", "w-[100px]", "w-[140px]", "w-[82px]", "w-[18px]", "w-[122px]", "w-[25px]", "w-[75px]", "w-[100px]", "w-[75px]", "w-[75px]", ""].map((c, i) => <col key={i} className={c} />)}
        </colgroup>
        <thead>
          <tr className="h-6 whitespace-nowrap border-b border-[#dcdcdc]">
            <th className="pl-2 text-left font-bold">I›</th>
            <th className="border-r border-[#ececec] pl-1.5 text-left font-bold text-[#222]">POSITION/ORDRE N°<Tri up className="ml-1.5 size-1.5" /></th>
            <th className={th}>A/V</th>
            <th className={th}>UNITÉS</th>
            <th className={th}>MONTANT</th>
            <th className="overflow-hidden border-r border-[#ececec] text-right font-normal">COUI</th>
            <th className="border-r border-[#ececec]" />
            <th className={th}>PV&amp;MV TOTALES<SortIcon /></th>
            <th className="border-r border-[#ececec]" />
            <th className={th}>STOP LOSS</th>
            <th className={th}>TAKE PROFIT</th>
            <th className="pr-1.5 text-right font-normal text-[#c97a00]">VENTE</th>
            <th className={th + " text-[#0092ae]"}>ACHAT</th>
            <th />
          </tr>
        </thead>
      </table>
      <div className="mx-auto mt-[21px] flex h-[54px] w-[65%] items-stretch overflow-hidden rounded-sm border border-[#ccc]">
        <div className="flex w-11 items-center justify-center bg-[#dcdddf]"><Info size={21} fill="#4a4a4a" stroke="#fff" /></div>
        <p className="flex items-center pl-3 text-[13px] text-[#666]">Aucune Transaction Ou Position.</p>
      </div>
    </section>
  );
}

/* ---------- task bar ---------- */

const chip = (a: string, b: string) => (
  <svg width="22" height="22" viewBox="0 0 22 22" aria-hidden="true">
    <path d="M3 4 10 1 20 17 12 21Z" fill={a} />
    <path d="M3 4 5 3 14 20 12 21Z" fill={b} />
    <path d="M2 7 9 19M12 3 20 15" stroke={b} strokeDasharray="1.500 1.500" strokeWidth="2" />
  </svg>
);
const PcIcon = () => (
  <svg width="24" height="24" viewBox="0 0 24 24" stroke="#222" aria-hidden="true">
    <path d="M6 1H20V12L17 15H3V4Z" fill="#c9c9c9" />
    <path d="M8 3H17V11H6V5Z" fill="#1010c8" />
    <path d="M3 17H14L17 15 21 18 18 23H4Z" fill="#e2e2e2" />
    <path d="M6 19H12M14 20H17" />
  </svg>
);
const taskIcons: [string, React.ReactNode][] = [
  ["Vue des tâches", <svg width="24" height="24" viewBox="0 0 24 24"><rect x="7" y="2" width="14" height="14" fill="#f4f4f4" /><rect x="2" y="8" width="13" height="13" fill="#222" /><rect x="7" y="8" width="8" height="8" fill="#999" /></svg>],
  ["Explorateur", <svg width="24" height="24" viewBox="0 0 24 24"><path d="M1 2H9L11 5H23V22H1Z" fill="#f5b91f" /><path d="M1 8H23V22H1Z" fill="#ffd75a" /><path d="M5 15H19V22H5Z" fill="#1a7fd4" /></svg>],
  ["Paramètres", <svg width="24" height="24" viewBox="0 0 24 24"><circle cx="12" cy="12" r="8.500" fill="none" stroke="#6d7b8a" strokeWidth="5" strokeDasharray="5 1.700" /><circle cx="12" cy="12" r="8" fill="#8796a5" /><circle cx="12" cy="12" r="4.500" fill="#0d5fb0" stroke="#fff" /></svg>],
  ["Capture", <svg width="24" height="24" viewBox="0 0 24 24" fill="none"><rect x="2" y="2" width="12" height="12" fill="#fff" stroke="#e8442a" strokeWidth="2" strokeDasharray="2 1" /><path d="M16 3V17M8 13H21" stroke="#8aa0b5" strokeWidth="2" /><circle cx="15" cy="20" r="2.500" stroke="#1aa7e0" strokeWidth="2" /><circle cx="21" cy="13" r="2.500" stroke="#1aa7e0" strokeWidth="2" /></svg>],
  ["Chrome", <svg width="24" height="24" viewBox="0 0 24 24"><circle cx="12" cy="12" r="11.500" fill="#fbc116" /><path d="M12 12 2 6.300A11.500 11.500 0 0 1 22 6.300Z" fill="#e33b2e" /><path d="M12 12 12 23.500A11.500 11.500 0 0 1 2 6.300Z" fill="#1e9e4a" /><circle cx="12" cy="12" r="5.500" fill="#fff" /><circle cx="12" cy="12" r="4.300" fill="#3b7ded" /></svg>],
  ["TradingView", <svg width="24" height="24" viewBox="0 0 24 24"><rect width="24" height="24" fill="#131722" /><path d="M3 7H11V17H7.500V10.500H3ZM17 7H21L17 17H13Z" fill="#fff" /><circle cx="14" cy="8.700" r="1.800" fill="#fff" /></svg>],
  ["Lecteur", <svg width="24" height="24" viewBox="0 0 24 24"><path d="M12 0 16 4 21 5 21 10 24 14 20 19 15 20 12 24 8 20 4 18 0 13 3 9 3 4 9 4Z" fill="#f07d1a" /><circle cx="12" cy="12" r="6.500" fill="#f5efd8" /><circle cx="12" cy="12" r="4" fill="#4a8a28" /><circle cx="12" cy="12" r="2" fill="#222" /></svg>],
  ["Terminal 1", <PcIcon />],
  ["Outil 1", chip("#777", "#444")],
  ["Outil 2", <svg width="22" height="22" viewBox="0 0 22 22"><path d="M3 12 12 5 19 9 11 18Z" fill="#3c3c3c" /><path d="M3 12 11 18V20L3 14Z" fill="#aaa" /></svg>],
  ["Terminal 2", <PcIcon />],
  ["Outil 3", chip("#777", "#999")],
  ["Outil 4", chip("#111", "#d6cf00")],
];

function TaskBar({ tray, gray }: { tray?: boolean; gray?: boolean }) {
  return (
    <footer className={"grid h-12 shrink-0 grid-cols-[1fr_auto_1fr] items-center font-['Open_Sans','Noto_Sans',sans-serif] text-[#222] " + (gray ? "bg-[#dadada]" : "bg-[#edf0f1]")}>
      <div />
      <div className="flex items-center pl-2.5">
        <button aria-label="Démarrer" className="mr-3.5">
          <svg width="25" height="24" viewBox="0 0 25 24" aria-hidden="true">
            <path d="M0 0H12V11H0ZM13 0H25V11H13Z" fill="#2fa8ea" />
            <path d="M0 12.500H12V24H0ZM13 12.500H25V24H13Z" fill="#0f83d6" />
          </svg>
        </button>
        <button className="mr-1 flex h-[31px] w-[115px] items-center justify-center gap-2 rounded-full bg-[#fafafa] text-[12px]">
          <Search size={14} strokeWidth={2} className="-scale-x-100" />Recherche
        </button>
        {taskIcons.map(([name, icon]) => (
          <button key={name} aria-label={name} className={"flex h-10 w-11 flex-col items-center justify-center " + (name === "Chrome" ? "relative" : "")}>
            {name === "Chrome" && <span className="absolute inset-x-1 inset-y-0 rounded-md border border-white bg-white/60" />}
            <span className="relative">{icon}</span>
            {name === "Chrome" && <span className="absolute bottom-0 h-[3px] w-4 rounded-full bg-[#0078d4]" />}
          </button>
        ))}
      </div>
      <div className="flex items-center justify-end gap-3 pr-4">
        {tray && <><ChevronUp size={14} /><Monitor size={15} strokeWidth={2} /><Volume2 size={16} strokeWidth={2} /></>}
        <div className={"text-right text-[11px] leading-4 " + (gray ? "text-[#666]" : "")}>17:05<br />28/02/2023</div>
      </div>
    </footer>
  );
}

/* ---------- desktops ---------- */

const panel = "flex min-h-0 min-w-0 flex-col border-r border-[#c4c4c4] bg-white";

const usa: Row[] = [
  ["US SPX 500", "3 966,16", "3 998,65", "-0,04 %", "1,61", "3 984,40", "d", "3 984,90", ""],
  ["US NDAQ 100", "12 003,38", "12 121,95", "+0,02 %", "3,22", "12 072,99", "u", "12 073,99", ""],
  ["US 30", "32 672,00", "32 997,42", "-0,41 %", "136,7", "32 782,59", "u", "32 784,59", ""],
  ["Euro 50", "4 221,1", "4 270,3", "-0,16 %", "7,15", "4 246,8", "", "4 248,4", ""],
  ["Allemagne 40", "15 284,29", "15 446,47", "-0,17 %", "26,89", "15 396,33", "", "15 397,33", ""],
  ["France 40", "7 247,92", "7 319,76", "-0,19 %", "14,07", "7 284,81", "u", "7 285,81", ""],
];
const america: Row[] = [
  ["US SPX 500 - Mar 2023", "3 972,03", "4 003,98", "-0,04 %", "1,62", "3 989,83", "d", "3 990,43", ""],
  ["US NDAQ 100 - Mar 2023", "12 028,3", "12 147,5", "+0,02 %", "2,7", "12 096,8", "u", "12 098,8", "u"],
  ["US 30 - Mar 2023", "32 690,7", "33 022,0", "-0,4 %", "133,95", "32 802,7", "u", "32 806,4", ""],
];
const europe: Row[] = [
  ["Euro 50 - Mar 2023", "4 224,5", "4 274,5", "-0,15 %", "6,75", "4 250,5", "", "4 252,5", ""],
  ["Allemagne 40 - Mar 2023", "15 304,0", "15 465,0", "-0,16 %", "26,05", "15 415,5", "", "15 417,5", ""],
  ["France 40 - Mar 2023", "7 255,8", "7 329,3", "-0,18 %", "13,8", "7 293,5", "u", "7 295,5", "u"],
];
const asie: Row[] = [
  ["Japon 225", "27 397,77", "27 587,64", "-0,17 %", "48,46", "27 480,68", "", "27 495,68", ""],
  ["Hong Kong 50", "19 743,9", "20 209,6", "-0,31 %", "63", "19 936,0", "d", "19 941,0", ""],
  ["Hong Kong Chine H-shares - Cash", "6 569,3", "6 755,1", "-0,75 %", "50,2", "6 627,8", "d", "6 645,8", ""],
  ["Chine A50 - Mar 2023", "13 252,0", "13 460,0", "+0,37 %", "49,5", "13 419,0", "d", "13 429,0", ""],
  ["Australie 200", "7 214,83", "7 274,49", "-0,39 %", "28,385", "7 225,82", "", "7 229,82", ""],
];
const divers: Row[] = [
  ["US Dollar Index - Mar 2023", "104,345", "104,873", "-0,03 %", "3,25", "104,560", "", "104,590", ""],
  ["EUR/USD", "1,05817", "1,06455", "-0 %", "0,4", "1,06086", "u", "1,06093", ""],
  ["Pétrole Brut Brent", "82,066", "84,248", "+1,89 %", "155,65", "83,864", "", "83,889", ""],
  ["Volatility Index - Mar 2023", "20,685", "21,625", "-2,23 %", "0,475", "20,735", "u", "20,815", ""],
];

function TopLeft() {
  return (
    <div className="flex min-h-0 min-w-0 flex-col bg-[#e2e2e2] pb-0.5">
      <Header kind="Demo" id="20600479" tabs={["Devises", "Commodities", "Indices"]} active="Indices" noWindows />
      <main className="mt-px grid min-h-0 flex-1 grid-cols-[912fr_1001fr] grid-rows-[414fr_388fr_210fr] gap-[7px]">
        <section className={panel}>
          <ChartTabs n="1" name="US SPX 500" pct="0,04 %" diff="1,61" sell="3 984,40" buy="3 984,90" spread="5,0" tick="down" />
          <Toolbar period="15 minutes" chips={["5m", "15m", "30m"]} span="10 heures" spans={["SLS", "3J", "1S"]} models={["1", "7"]} side="Vente" />
          <Chart
            sx={1.668} sy={3} dx={0} dy={-106} axisX={1397} priceX={1408} barW={11} x0={14} step={26.35} candles={spx} up={G} down={R}
            times={hours([281, 387, 493, 597, 703, 808, 913, 1020, 1125, 1230, 1335], 8)}
            prices={[[458, "4 000,00"], [656, "3 990,00"], [857, "3 980,00"], [1055, "3 970,00"], [1256, "3 960,00"]]}
            over={[[0, 576, 1397, 576, "#333", 2, DOT], [140, 739, 1397, 739, RED, 1, DOT], [0, 772, 1397, 772, RED, 1], [0, 1137, 832, 1137, YL, 2, DOT]]}
            notes={[[6, 548, "(50,00 %)", "#444"], [0, 743, "-1,56 / -0,04 %", "#f03030"]]}
            tags={[[1400, 575, "3 994,04", "#333", "#fff"], [1397, 737, "3 985,96", "#f00", "#fff", "axis"], [1397, 1211, "3 962,00", "#111", "#fff", "axis"], [834, 1136, "3 965,94", YL, "#222"]]}
            stamp={[0, "28 févr. 2023 20:00:00"]} marker={1227}
          />
          <BottomBar />
        </section>
        <section className={panel}>
          <ChartTabs n="1" name="US NDAQ 100" up pct="0,02 %" diff="3,22" sell="12 072,99" buy="12 073,99" spread="1,00" />
          <Toolbar period="15 minutes" chips={["5m", "15m", "30m"]} span="2 Jours" spans={["SLS", "3J", "1S"]} models={["1", "7"]} side="Vente" params />
          <Chart
            sx={1.568} sy={3} dx={1} dy={-106} axisX={1451} priceX={1463} barW={3} x0={4} step={10.68} candles={ndaq2d} up={G} down={R}
            times={[[107, "10:00"], [191, "12:00"], [278, "14:00"], [362, "16:00"], [448, "18:00"], [533, "20:00"], [619, "22:00"], [704, "01:00"], [790, "03:00"], [875, "05:00"], [961, "07:00"], [1046, "09:00"], [1132, "11:00"], [1217, "13:00"], [1304, "15:00"], [1388, "17:00"]]}
            prices={[[373, "12 200,00"], [494, "12 160,00"], [613, "12 120,00"], [857, "12 040,00"], [980, "12 000,00"]]}
            zones={[[335, 512, 559, 589, "#e3f7fb", "#00d4f0"], [228, 799, 635, 892, "#e3f7fb", "#00d4f0"]]}
            over={[[0, 761, 1451, 761, RED, 1], [113, 769, 1451, 769, RED, 1, DOT], [0, 876, 1451, 876, "#222", 2, DOT], [292, 486, 422, 486, YL, 2, DOT], [463, 618, 558, 618, YL, 2, DOT], [1178, 618, 1392, 618, RED, 2, DOT], [1295, 681, 1403, 681, YL, 2, DOT], [975, 972, 1372, 972, "#4dff4d", 2, DOT]]}
            notes={[[0, 773, "3,72 / 0,03 %", "#f03030"], [4, 848, "(38,20 %)", "#444"]]}
            tags={[[424, 482, "12 162,71", YL, "#222"], [562, 615, "12 118,94", YL, "#222"], [1395, 615, "12 118,89", "#f00", "#fff"], [1406, 680, "12 098,52", YL, "#222"], [1375, 970, "12 002,99", "#4dff4d", "#222"], [1451, 757, "12 072,99", "#00b300", "#fff", "live"], [1455, 876, "12 034,40", "#333", "#fff"]]}
            marker={1371}
          />
          <Tray labels blanks={4} tools={["Ligne De ...", "Ligne S/r", "Cours", "Fixe", "Nb", "Fibonacci", "Évent. De ...", "Rectangle", "Ovale", "Flèche", "Vague Mo...", "Vague Co..."]} />
          <BottomBar fav />
        </section>
        <section className={panel}>
          <ChartTabs n="1" name="US 30" pct="0,41 %" diff="136,7" sell="32 782,59" buy="32 784,59" spread="2,00" />
          <Toolbar period="15 minutes" chips={["5m", "15m", "30m"]} span="13 heures" spans={["SLS", "3J", "1S"]} models={["1", "7"]} side="Vente" />
          <Chart
            sx={1.668} sy={2.613} dx={0} dy={-67} axisX={1397} priceX={1408} barW={9} x0={12} step={22.17} candles={us30} up={G} down={R}
            times={[...hours([130, 219, 309, 397, 485, 574, 663, 750, 840], 4), [916, "13"], [1195, "16:00"], [1283, "17:00"], [1372, "18:00"]]}
            prices={[[268, "32 950,00"], [384, "32 900,00"], [499, "32 850,00"], [610, "32 800,00"], [725, "32 750,00"], [840, "32 700,00"], [953, "32 650,00"]]}
            over={[[160, 343, 1397, 343, RED, 1, DOT], [0, 655, 1397, 655, RED, 1], [0, 585, 368, 585, YL, 2, DOT], [0, 687, 810, 687, YL, 2, DOT]]}
            notes={[[0, 347, "-135,70 / -0,41 %", "#f03030"]]}
            tags={[[1397, 341, "32 918,29", "#f00", "#fff", "axis"], [1397, 464, "32 862,88", "#111", "#fff", "axis"], [370, 583, "32 812,20", YL, "#222"], [812, 685, "32 766,99", YL, "#222"]]}
            stamp={[930, "28 févr. 2023 20:00:00"]} marker={1275}
          />
          <BottomBar />
        </section>
        <section className={panel}>
          <ChartTabs n="1" name="Allemagne 40" pct="0,17 %" diff="26,89" sell="15 396,33" buy="15 397,33" spread="1,00" />
          <Toolbar period="15 minutes" chips={["5m", "15m", "30m"]} span="13 heures" spans={["SLS", "3J", "1S"]} models={["1", "7"]} side="Vente" params />
          <Chart
            sx={1.568} sy={2.529} dx={1} dy={-67} axisX={1451} priceX={1463} barW={9} x0={9} step={20.74} candles={dax} up={G} down={R}
            times={hours([140, 223, 306, 389, 472, 555, 638, 721, 805, 888, 971, 1054, 1136, 1219, 1302, 1385], 4)}
            prices={[[280, "15 450,00"], [499, "15 390,00"], [608, "15 360,00"], [717, "15 330,00"], [826, "15 300,00"]]}
            over={[[140, 390, 1451, 390, RED, 1, DOT], [0, 476, 1451, 476, RED, 1], [278, 882, 818, 882, YL, 2, DOT]]}
            notes={[[0, 394, "-23,64 / -0,15 %", "#f03030"]]}
            tags={[[1451, 389, "15 419,97", "#f00", "#fff", "axis"], [1451, 473, "15 396,33", "#00b300", "#fff", "live"], [820, 881, "15 284,49", YL, "#222"]]}
            marker={1212}
          />
          <BottomBar />
        </section>
        <div className="col-span-2 grid min-h-0">
          <WatchList title="USA E-U" rows={usa} cols={["", "w-[502px]", "w-[96px]", "w-[160px]", "w-[97px]", "w-[97px]"]} />
        </div>
      </main>
    </div>
  );
}

const CloseBox = () => (
  <button aria-label="Fermer le groupe" className="absolute right-1.5 top-1 text-[#777]"><X size={14} strokeWidth={2} /></button>
);

function TopRight() {
  return (
    <div className="flex min-h-0 min-w-0 flex-col bg-[#e2e2e2] pb-0.5">
      <div className="h-0.5 shrink-0 bg-white" />
      <Header kind="Demo" id="13201555" tabs={["Accueil"]} active="Accueil" mouse summary />
      <main className="mt-px grid min-h-0 flex-1 grid-rows-[848fr_169fr] gap-[7px]">
        <div className="grid min-h-0 grid-cols-[1111fr_802fr] gap-[7px]">
          <div className="grid min-h-0 grid-rows-[146fr_147fr_176fr_176fr_175fr] gap-[7px]">
            <WatchList title="AMERICA" rows={america} cols={["", "w-[100px]", "w-[100px]", "w-[140px]", "w-[125px]", "w-[125px]"]} />
            <WatchList title="EUROPE" rows={europe} cols={["", "w-[100px]", "w-[100px]", "w-[140px]", "w-[124px]", "w-[124px]"]} />
            <div className="relative flex items-end gap-[3px] bg-[#efefef] pb-5 pl-1">
              <CloseBox />
              <Tile name="US SPX 500" month="Mar 2023" pct="0,04 %" diff="1,62" spread="6,0" tick="d" sell="3989,83" buy="3990,43" low="3 972,03" high="4 003,98" />
              <Tile name="US NDAQ 100" month="Mar 2023" up pct="0,02 %" diff="2,7" spread="2,0" tick="u" sell="12096,8" buy="12098,8" low="12 028,3" high="12 147,5" qty="0,5" search={false} />
              <Tile name="US 30" month="Mar 2023" pct="0,4 %" diff="133,95" spread="3,7" tick="u" sell="32802,7" buy="32806,4" low="32 690,7" high="33 022,0" />
            </div>
            <div className="relative flex items-center gap-[3px] bg-[#efefef] pl-1">
              <CloseBox />
              <Tile name="Euro 50" month="Mar 2023" pct="0,15 %" diff="6,75" spread="2,0" sell="4250,5" buy="4252,5" low="4 224,5" high="4 274,5" />
              <Tile big name="US NDAQ 100" month="Mar 2023" up pct="0,02 %" diff="2,7" spread="2,0" tick="u" sell="12096,8" buy="12098,8" low="12 028,3" high="12 147,5" qty="0,5" />
              <Tile name="France 40" month="Mar 2023" pct="0,18 %" diff="13,8" spread="2,0" tick="u" sell="7293,5" buy="7295,5" low="7 255,8" high="7 329,3" />
            </div>
            <Positions />
          </div>
          <section className={panel}>
            <ChartTabs n="1" name="US NDAQ 100 - Mar 2023" up pct="0,02 %" diff="2,7" sell="12 096,8" buy="12 098,8" spread="2,0" tick="up" ladder />
            <Toolbar period="2 minutes" chips={["2m", "3m", "5m"]} span="2 heures" spans={[]} models={["2", "3"]} side="Achat" />
            <Chart
              sx={1.912} sy={1.668} dx={-18} dy={-108} axisX={1424} priceX={1440} barW={5} x0={47} step={18.5} candles={ndaqMar} up="#00b300" down="#ff0000"
              times={[[358, "15:30"], [637, "16:00"], [914, "16:30"], [1192, "17:00"]]}
              prices={[[357, "12 120,0"], [612, "12 100,0"], [869, "12 080,0"], [1124, "12 060,0"], [1379, "12 040,0"]]}
              over={[[34, 630, 1424, 630, RED, 1], [168, 658, 1424, 658, RED, 1, DOT]]}
              notes={[[36, 660, "2,2 / 0,02 %", "#f03030"]]}
              tags={[[1424, 657, "12 096,6", "#f00", "#fff", "axis"], [1424, 628, "12 098,8", "#00b300", "#fff", "live"]]}
              marker={1213}
            />
            <BottomBar />
          </section>
        </div>
        <div className="grid min-h-0 grid-cols-[1005fr_909fr] gap-1.5">
          <WatchList title="ASIE" rows={asie} cols={["", "w-[100px]", "w-[100px]", "w-[140px]", "w-[76px]", "w-[75px]"]} />
          <WatchList title="DIVERS" rows={divers} cols={["", "w-[100px]", "w-[100px]", "w-[140px]", "w-[76px]", "w-[75px]"]} />
        </div>
      </main>
    </div>
  );
}

function BottomLeft() {
  const OR = "#ffa010", GN = "#4dff4d";
  const dash = "6 5";
  return (
    <div className="flex min-h-0 min-w-0 flex-col bg-[#b5b6b8]">
      <Header kind="Réel" id="21978566" real tabs={["Trade", "Action Europe", "Action Usa"]} active="Trade" mouse noWindows />
      <nav className="flex h-6 shrink-0 items-center gap-1 pl-0.5 text-[12px] text-[#222]">
        <button className="h-[19px] w-[118px] rounded-sm bg-white leading-[18px] text-[#007aff]">US NDAQ 100</button>
        <button className="h-[19px] w-[133px] rounded-sm bg-[#edeef0] leading-[18px]">Europe-Amérique</button>
        <button className="h-[19px] w-[107px] rounded-sm bg-[#edeef0] leading-[18px]">Positions (0)</button>
      </nav>
      <section className={panel + " flex-1"}>
        <ChartTabs n="2" name="US NDAQ 100" up pct="0,02 %" diff="3,22" sell="12 072,99" buy="12 073,99" spread="1,00" ladder min />
        <Toolbar period="10 secondes" chips={["10s", "30s", "1m"]} span="53 Minutes" spans={["SLS", "1J", "1S"]} models={["1", "2", "5", "6"]} side="Achat" params />
        <Chart
          sx={1} sy={1} dx={0} dy={-1209} axisX={1847} priceX={1855} barW={3} x0={2} step={3.93} candles={tenSec} up="#14cfe0" down="#f59c1a" axisFill="#dbc9b7"
          times={[[41, "16:00"], [394, "16:15"], [748, "16:30"], [1101, "16:45"], [1455, "17:00"]]}
          prices={[[1317, "12 100,00"], [1473, "12 080,00"], [1627, "12 060,00"], [1782, "12 040,00"], [1936, "12 020,00"]]}
          zones={[[-20, 1843, 1900, 1952, "#e5f9fd", "#00d4f0"], [1237, 1869, 1543, 1907, "#d0f5fb", "#00d4f0"], [1311, 1776, 1535, 1813, "#fff4e3", OR]]}
          under={[[0, 1427, 1847, 1427, "#ff4dff", 4, "5 5"], [0, 1568, 1847, 1568, "#00d9ff", 4, DOT]]}
          over={[
            [0, 1519, 1847, 1519, RED, 1], [75, 1540, 1847, 1540, RED, 1, DOT],
            [153, 1319, 326, 1319, YL, 2, DOT], [337, 1492, 703, 1492, YL, 2, DOT], [531, 1649, 697, 1649, YL, 2, DOT], [0, 1666, 543, 1666, YL, 2, DOT],
            [630, 1766, 833, 1766, YL, 2, DOT], [680, 1811, 888, 1811, YL, 2, DOT], [1080, 1617, 1682, 1617, YL, 2, DOT], [1162, 1688, 1485, 1688, YL, 2, DOT],
            [1217, 1776, 1438, 1776, YL, 2, DOT], [1311, 1813, 1498, 1813, YL, 2, DOT], [1240, 1910, 1450, 1910, YL, 2, DOT], [0, 2048, 1847, 2048, YL, 2, DOT],
            [0, 1763, 632, 1692, OR, 2, dash], [441, 1709, 642, 1574, OR, 2, dash], [1131, 1840, 1217, 1817, OR, 2, dash], [1241, 1915, 1696, 1682, OR, 2, dash], [1325, 1877, 1453, 1660, OR, 2, dash],
            [1249, 1909, 1281, 1762, GN, 2, dash], [1281, 1762, 1331, 1868, GN, 2, dash], [1331, 1868, 1486, 1617, GN, 2, dash],
          ]}
          notes={[[0, 1542, "2,72 / 0,02 %", "#f03030"], [1276, 1755, "A", GN], [1327, 1876, "B", GN], [1484, 1607, "C", GN]]}
          tags={[
            [327, 1319, "12 099,86", YL, "#222"], [704, 1491, "12 077,50", YL, "#222"], [698, 1648, "12 057,19", YL, "#222"], [543, 1665, "12 054,93", YL, "#222"],
            [834, 1765, "12 041,97", YL, "#222"], [889, 1811, "12 036,15", YL, "#222"], [1683, 1617, "12 061,31", YL, "#222"], [1486, 1688, "12 052,04", YL, "#222"],
            [1439, 1775, "12 040,73", YL, "#222"], [1498, 1813, "12 035,96", YL, "#222"], [1451, 1909, "12 023,36", YL, "#222"], [1849, 2047, "12 005,68", YL, "#222"],
            [1849, 1426, "12 085,94", "#ff4dff", "#222"], [1849, 1568, "12 067,55", "#00d9ff", "#222"], [1847, 1807, "12 036,40", "#111", "#fff", "axis"],
            [1847, 1540, "12 071,27", "#f00", "#fff", "axis"], [1847, 1518, "12 073,99", "#00b300", "#fff", "live"],
          ]}
          stamp={[1724, "28 févr. 2023 17:20:30"]} marker={1574}
        >
          <ellipse cx="1250" cy="690" rx="9" ry="67" fill="#ff8a9a" fillOpacity="0.3" stroke="#e8101b" strokeWidth="2" strokeDasharray="60 40" />
        </Chart>
        <Tray blanks={19} tools={["Ligne De ...", "Ligne S/r", "Cours", "Fixe", "Nb", "Fibonacci", "Éventail", "Rectangle", "Ovale", "Flèche", "Cycles", "Vague Mo...", "Vague Co..."]} />
      </section>
      <TaskBar tray />
    </div>
  );
}

function BottomRight() {
  return (
    <div className="flex min-h-0 min-w-0 flex-col bg-white">
      <div className="flex h-6 shrink-0 items-center gap-1.5 border-b border-[#c2c2c2] bg-[#e8eaed] pl-2 font-['Open_Sans','Noto_Sans',sans-serif] text-[12px] text-[#888]">
        <svg width="14" height="15" viewBox="0 0 22 26" aria-hidden="true"><path d="M1 2q4 .5 4 6v18q-4-.5-4-3ZM9 1.500q4 .5 4 6V26q-4-.5-4-3ZM21 0v26q-4-.5-4-4V5q0-4 4-5Z" fill="#17b5d0" /></svg>
        <span className="flex-1">CMC Markets - Google Chrome</span>
        <div className="flex gap-[30px] pr-4">
          <button aria-label="Réduire"><Minus size={13} strokeWidth={2} /></button>
          <button aria-label="Restaurer"><Copy size={12} strokeWidth={2} className="-scale-x-100" /></button>
          <button aria-label="Fermer"><X size={15} strokeWidth={2} /></button>
        </div>
      </div>
      <div className="flex h-7 shrink-0 items-center gap-2.5 border-b-2 border-[#999] pl-3 font-['Open_Sans','Noto_Sans',sans-serif] text-[14px] text-[#555]">
        <Lock size={13} fill="#555" />
        <span><span className="text-[#111]">platform.cmcmarkets.com</span>/popout.html#/app?r=FR&amp;b=CMC-CFD</span>
      </div>
      <section className="flex min-h-0 flex-1 flex-col border-t border-black">
        <ChartTabs dark n="4" name="US NDAQ 100" up pct="0,02 %" diff="3,22" sell="12 072,99" buy="12 073,99" spread="-" />
        <Toolbar dark period="5 minutes" chips={["10s", "30s", "1m"]} span="11 heures" spans={["SLS", "1J", "1S"]} models={["1", "2", "5", "6"]} side="Achat" params />
        <Chart
          sx={0.8167} sy={1.4425} dx={0} dy={-112} axisX={1508} priceX={1514} barW={12} x0={6} step={11.605} candles={ndaq5m} up="#1ee3f0" down="#f4a93d"
          times={hours([79, 218, 358, 496, 635, 775, 914, 1053, 1192, 1331, 1471], 8)}
          prices={[[186, "12 140,00"], [365, "12 120,00"], [544, "12 100,00"], [724, "12 080,00"], [903, "12 060,00"], [1082, "12 040,00"], [1262, "12 020,00"], [1441, "12 000,00"]]}
          over={[[0, 671, 1508, 671, "#ff00ff", 4, "5 4"], [0, 838, 1508, 838, "#4dff4d", 4, "5 4"], [0, 835, 1508, 835, "#00d9ff", 4, DOT], [0, 778, 1508, 778, RED, 1], [60, 802, 1508, 802, RED, 1, DOT], [1316, 457, 1508, 457, "#777", 2], [1316, 1390, 1508, 1390, "#777", 2], [1316, 869, 1508, 869, "#ff7aff", 2]]}
          notes={[[0, 804, "2,72 / 0,02 %", "#f03030"]]}
          tags={[[1510, 834, "12 067,55", "#00d9ff", "#222"], [1510, 669, "12 085,94", "#ff00ff", "#222"], [1508, 802, "12 071,27", "#f00", "#fff", "axis"], [1508, 776, "12 073,99", "#b00000", "#fff", "live"], [1508, 1058, "12 042,40", "#111", "#fff", "axis"]]}
          marker={1340}
        />
        <BottomBar dark />
      </section>
      <TaskBar gray />
    </div>
  );
}

export default function App() {
  return (
    <div className="grid h-screen grid-cols-2 grid-rows-2 overflow-hidden bg-white font-['Liberation_Sans',Arial,sans-serif] leading-normal">
      <TopLeft />
      <TopRight />
      <BottomLeft />
      <BottomRight />
    </div>
  );
}
